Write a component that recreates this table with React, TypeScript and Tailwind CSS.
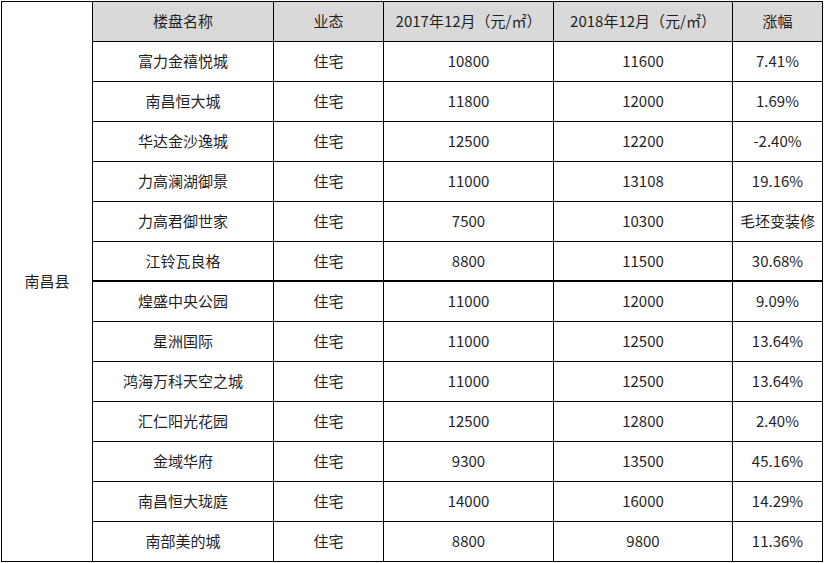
const HEADERS = ['楼盘名称', '业态', '2017年12月（元/㎡）', '2018年12月（元/㎡）', '涨幅'];

const ROWS: [string, string, string, string, string][] = [
  ['富力金禧悦城', '住宅', '10800', '11600', '7.41%'],
  ['南昌恒大城', '住宅', '11800', '12000', '1.69%'],
  ['华达金沙逸城', '住宅', '12500', '12200', '-2.40%'],
  ['力高澜湖御景', '住宅', '11000', '13108', '19.16%'],
  ['力高君御世家', '住宅', '7500', '10300', '毛坯变装修'],
  ['江铃瓦良格', '住宅', '8800', '11500', '30.68%'],
  ['煌盛中央公园', '住宅', '11000', '12000', '9.09%'],
  ['星洲国际', '住宅', '11000', '12500', '13.64%'],
  ['鸿海万科天空之城', '住宅', '11000', '12500', '13.64%'],
  ['汇仁阳光花园', '住宅', '12500', '12800', '2.40%'],
  ['金域华府', '住宅', '9300', '13500', '45.16%'],
  ['南昌恒大珑庭', '住宅', '14000', '16000', '14.29%'],
  ['南部美的城', '住宅', '8800', '9800', '11.36%'],
];

export default function App() {
  return (
    <div
      className="h-[563px] w-[825px] bg-white p-px text-[15px] text-[#1f1f1f]"
      style={{ fontFamily: '"Noto Sans CJK SC", "Microsoft YaHei", sans-serif' }}
    >
      <div className="grid w-[822px] grid-cols-[91px_181px_110px_170px_179px_90px] grid-rows-[repeat(14,40px)] border-l border-t border-black">
        <div className="row-span-14 flex items-center justify-center border-b border-r border-black">
          南昌县
        </div>
        {HEADERS.map((h) => (
          <div
            key={h}
            className="flex items-center justify-center border-b border-r border-black bg-[#d9d9d9] whitespace-nowrap"
          >
            {h}
          </div>
        ))}
        {ROWS.map((row, i) =>
          row.map((cell, j) => (
            <div
              key={`${i}-${j}`}
              className={`flex items-center justify-center border-r border-black whitespace-nowrap ${
                i === 5 ? 'border-b-2' : 'border-b'
              }`}
            >
              {cell}
            </div>
          )),
        )}
      </div>
    </div>
  );
}
